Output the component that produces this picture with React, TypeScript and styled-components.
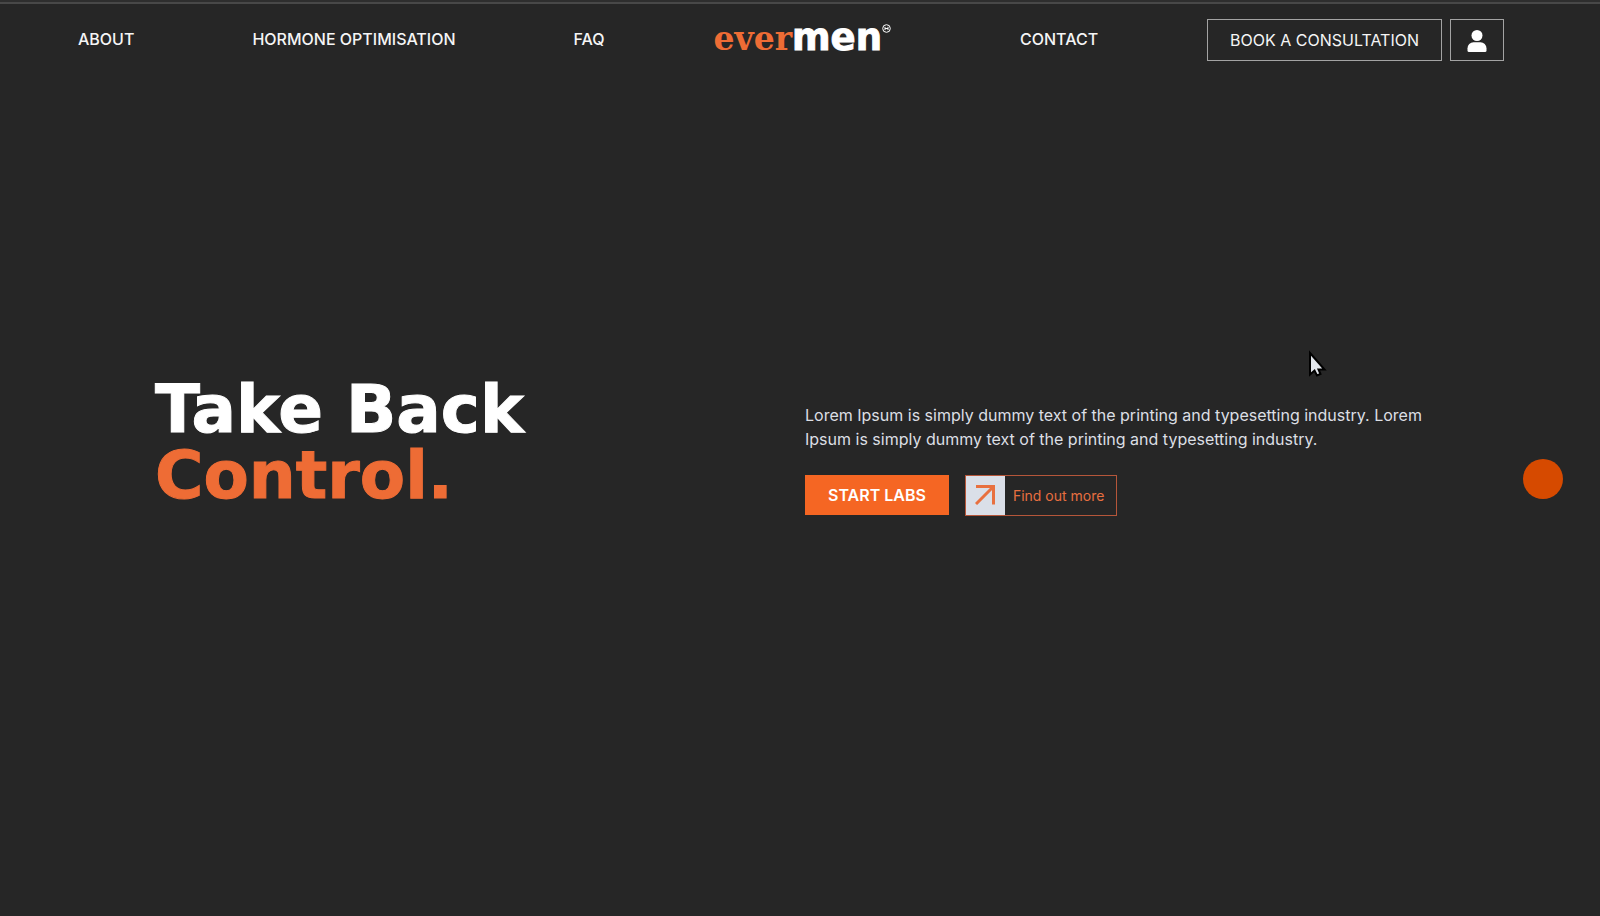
import React from "react";
import styled, { createGlobalStyle } from "styled-components";

const GlobalStyle = createGlobalStyle`
  * { box-sizing: border-box; }
  body {
    margin: 0;
    background: #262626;
    color: #f5f5f5;
    font-family: Inter, "Liberation Sans", sans-serif;
    font-size: 16px;
  }
  button { font-family: inherit; font-size: inherit; }
`;

const Page = styled.div`
  position: relative;
  min-height: 100vh;
  display: flex;
  flex-direction: column;
  border-top: 2px solid #2e2e2e;
`;

const Header = styled.header`
  display: flex;
  align-items: flex-start;
  justify-content: space-between;
  height: 78px;
  padding: 15px 96px 0 78px;
  border-top: 2px solid #484848;
`;

const Nav = styled.nav`
  display: flex;
  gap: 118px;
`;

const NavLink = styled.a`
  color: inherit;
  font-weight: 500;
  line-height: 40px;
  text-decoration: none;
  white-space: nowrap;
`;

const Logo = styled.a`
  display: flex;
  align-items: baseline;
  padding-right: 20px;
  line-height: 38px;
  font-weight: 700;
  text-decoration: none;
`;

const LogoEver = styled.span`
  color: #ee6c35;
  font-family: "DejaVu Serif", serif;
  font-size: 33px;
`;

const LogoMen = styled.span`
  color: #fff;
  font-family: "DejaVu Sans", sans-serif;
  font-size: 37px;
  -webkit-text-stroke: 1px #fff;
`;

const LogoMark = styled.svg`
  align-self: flex-start;
  margin-top: 5px;
`;

const Actions = styled.div`
  display: flex;
  gap: 8px;
`;

const OutlineButton = styled.button<{ $pad: number }>`
  display: flex;
  align-items: center;
  height: 42px;
  padding: 0 ${(p) => p.$pad}px;
  border: 1px solid #a3a3a3;
  background: transparent;
  color: #f5f5f5;
`;

const AccountIcon = styled.svg`
  margin-top: 2px;
`;

const Hero = styled.main`
  flex: 1;
  display: grid;
  grid-template-columns: 1fr 1fr;
  align-items: center;
  padding: 0 155px 78px;
`;

const Title = styled.h1`
  margin: 0;
  padding-bottom: 32px;
  color: #fff;
  font-family: "DejaVu Sans", sans-serif;
  font-size: 66px;
  font-weight: 700;
  line-height: 66px;
  -webkit-text-stroke: 1px currentColor;
`;

const Accent = styled.span`
  display: block;
  color: #ee6c35;
`;

const Intro = styled.div`
  display: flex;
  flex-direction: column;
  gap: 24px;
  padding-left: 5px;
`;

const Copy = styled.p`
  margin: 0;
  color: #dcdfe4;
  line-height: 24px;
`;

const ButtonRow = styled.div`
  display: flex;
  gap: 16px;
`;

const StartButton = styled.button`
  height: 40px;
  padding: 0 23px;
  border: 0;
  background: #f56623;
  color: #fff;
  font-weight: 600;
`;

const MoreButton = styled.button`
  display: flex;
  align-items: center;
  gap: 8px;
  height: 41px;
  padding: 0 12px 0 0;
  border: 1px solid #b5563a;
  background: transparent;
`;

const MoreLabel = styled.span`
  color: #e86f40;
  font-size: 14px;
`;

const ArrowBox = styled.span`
  display: flex;
  align-items: center;
  justify-content: center;
  width: 39px;
  height: 39px;
  background: #dadfe8;
`;

const Dot = styled.span`
  position: absolute;
  top: 50%;
  right: 37px;
  width: 40px;
  height: 40px;
  border-radius: 50%;
  background: #d64a00;
`;

const Pointer = styled.svg`
  position: absolute;
  top: 348px;
  left: 1308px;
`;

export default function App() {
  return (
    <Page>
      <GlobalStyle />
      <Header>
        <Nav aria-label="Main">
          <NavLink href="#about">ABOUT</NavLink>
          <NavLink href="#hormone">HORMONE OPTIMISATION</NavLink>
          <NavLink href="#faq">FAQ</NavLink>
        </Nav>
        <Logo href="#home">
          <LogoEver>ever</LogoEver>
          <LogoMen>men</LogoMen>
          <LogoMark width="9" height="9" viewBox="0 0 9 9" aria-hidden="true">
            <circle cx="4.5" cy="4.5" r="3.8" fill="none" stroke="#fff" />
            <path d="M3 2.8V6.2M6 2.8V6.2M3 4.5H6" stroke="#fff" fill="none" />
          </LogoMark>
        </Logo>
        <NavLink href="#contact">CONTACT</NavLink>
        <Actions>
          <OutlineButton $pad={22}>BOOK A CONSULTATION</OutlineButton>
          <OutlineButton $pad={16} aria-label="Account">
            <AccountIcon width="20" height="22" viewBox="0 0 20 22" fill="#fff" aria-hidden="true">
              <circle cx="10" cy="5.5" r="5.5" />
              <path d="M0.5 20.5V18.3A6 6 0 0 1 6.5 12.3H13.5A6 6 0 0 1 19.5 18.3V20.5Q19.5 22 18 22H2Q0.5 22 0.5 20.5Z" />
            </AccountIcon>
          </OutlineButton>
        </Actions>
      </Header>
      <Hero>
        <Title>
          Take Back
          <Accent>Control.</Accent>
        </Title>
        <Intro>
          <Copy>
            Lorem Ipsum is simply dummy text of the printing and typesetting industry. Lorem
            Ipsum is simply dummy text of the printing and typesetting industry.
          </Copy>
          <ButtonRow>
            <StartButton>START LABS</StartButton>
            <MoreButton>
              <ArrowBox>
                <svg width="20" height="20" viewBox="0 0 20 20" fill="none" stroke="#e8703f" strokeWidth="3" aria-hidden="true">
                  <path d="M1 1.5H18.5V19.5M18.5 1.5L1 19" />
                </svg>
              </ArrowBox>
              <MoreLabel>Find out more</MoreLabel>
            </MoreButton>
          </ButtonRow>
        </Intro>
      </Hero>
      <Dot />
      <Pointer width="20" height="28" viewBox="0 0 20 28" aria-hidden="true">
        <path d="M2 3V24.5L6.5 20.5L9 25.5L12.5 24L10.5 19.5H16.5Z" fill="#e2e6ec" stroke="#000" strokeWidth="2" />
      </Pointer>
    </Page>
  );
}
